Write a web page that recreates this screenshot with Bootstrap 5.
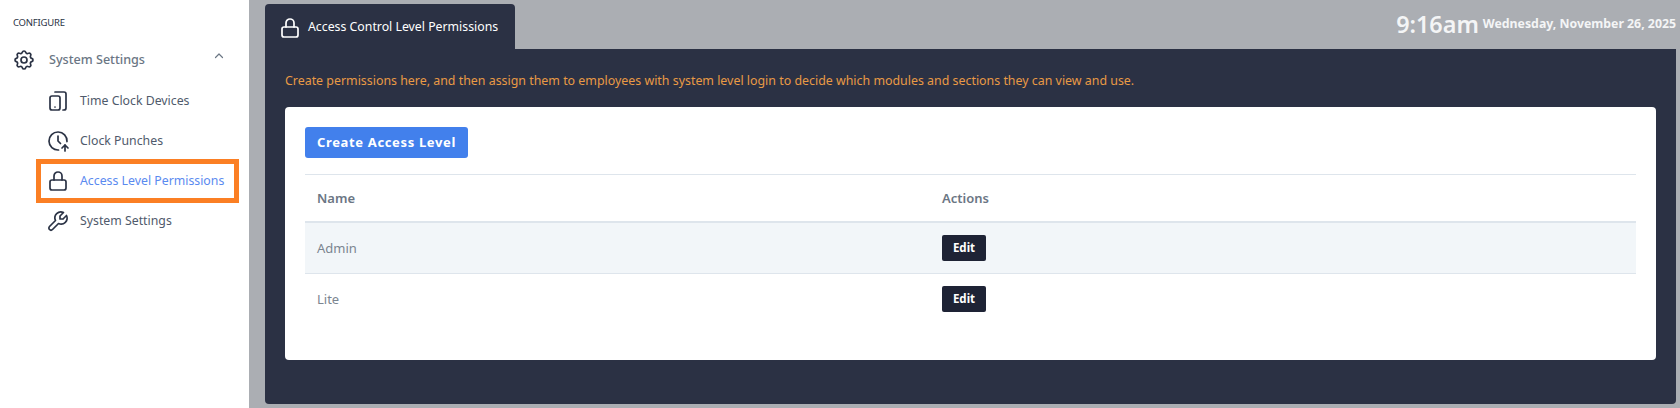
<!DOCTYPE html>
<html lang="en">
<head>
<meta charset="utf-8">
<title>Access Control Level Permissions</title>
<link href="https://cdn.jsdelivr.net/npm/bootstrap@5.3.0/dist/css/bootstrap.min.css" rel="stylesheet">
<style>
html,body{height:408px;overflow:hidden}
body{font-family:"Noto Sans","Open Sans",sans-serif;background:#abaeb3;font-size:13px}
.app-shell{height:408px}
.side-pane{width:249px;background:#fff;flex:none;padding:16px 0 0 13px}
.side-head{font-size:9.5px;color:#2b3345;line-height:13px;letter-spacing:-.2px}
.side-parent{height:40px;margin-top:11px;margin-right:13px;color:#6b7684;font-size:12.6px;font-weight:500}
.side-parent .gear{width:24px;height:24px;margin-left:-1px;margin-right:13px;color:#2b3345;flex:none}
.side-parent .chev{width:12px;height:12px;margin-left:auto;margin-right:11px;margin-top:-8px;color:#6b7684}
.side-sub{list-style:none;margin:0;padding:1px 0 0 36px}
.side-link{height:40px;color:#4f5a6b;text-decoration:none;position:relative;font-size:12.3px}
.side-link svg{width:24px;height:24px;margin-left:-3px;margin-right:10px;color:#2b3345;flex:none}
.side-link.current{color:#5a8af0}
.side-link.current::after{content:"";position:absolute;left:-13px;top:-2px;width:203px;height:44px;border:5px solid #fb7f24}
.main-pane{padding:4px 4px 4px 16px;min-width:0}
.top-strip{height:45px}
.tab-head{width:250px;height:45px;background:#2b3144;color:#fff;border-radius:4px 4px 0 0;padding:2px 0 0 13px;font-size:12.3px}
.tab-head svg{width:24px;height:24px;margin-right:6px;flex:none}
.clock-box{color:#f4f5f6;margin-top:-5px}
.clock-time{font-size:23.4px;font-weight:600;line-height:28px;margin-right:4px}
.clock-date{font-size:12.3px;font-weight:700;margin-top:1px}
.dark-panel{background:#2b3144;border-radius:0 0 4px 4px;padding:20px;height:355px}
.note-line{color:#e99a45;font-size:12.4px;line-height:22px;margin-bottom:15px;padding-top:1px}
.white-box{background:#fff;border-radius:4px;padding:20px;height:253px}
.make-btn{background:#4280ec;color:#fff;font-size:13px;font-weight:700;border:0;border-radius:3px;height:31px;width:163px;padding:0;letter-spacing:.65px}
.make-btn:hover{background:#4280ec;color:#fff}
.rule-line{margin:16px 0 0;border:0;border-top:1px solid #dee5ec;opacity:1}
.perm-grid{margin:0;table-layout:fixed;font-size:13px}
.perm-grid th{color:#6b7684;font-weight:600;height:47px;padding:1px 12px 0;vertical-align:middle;border-bottom:2px solid #dee5ec}
.perm-grid td{color:#7b8590;height:51px;padding:0 12px;vertical-align:middle;border-bottom:1px solid #dee5ec}
.perm-grid .name-cell{padding-top:1px}
.perm-grid tr:last-child td{border-bottom:0}
.perm-grid .tint td{background:#f2f6f9}
.edit-btn{background:#1e2335;color:#fff;font-size:11.5px;font-weight:700;border:0;border-radius:2px;width:44px;height:26px;padding:0}
.edit-btn:hover{background:#1e2335;color:#fff}
.col-one{width:625px}
</style>
</head>
<body>
<div class="app-shell d-flex">
  <aside class="side-pane">
    <div class="side-head">CONFIGURE</div>
    <div class="side-parent d-flex align-items-center">
      <svg class="gear" viewBox="0 0 24 24" fill="none" stroke="currentColor" stroke-width="1.7" stroke-linecap="round" stroke-linejoin="round"><path d="M10.325 4.317c.426-1.756 2.924-1.756 3.35 0a1.724 1.724 0 0 0 2.573 1.066c1.543-.94 3.31.826 2.37 2.37a1.724 1.724 0 0 0 1.065 2.572c1.756.426 1.756 2.924 0 3.35a1.724 1.724 0 0 0-1.066 2.573c.94 1.543-.826 3.31-2.37 2.37a1.724 1.724 0 0 0-2.572 1.065c-.426 1.756-2.924 1.756-3.35 0a1.724 1.724 0 0 0-2.573-1.066c-1.543.94-3.31-.826-2.37-2.37a1.724 1.724 0 0 0-1.065-2.572c-1.756-.426-1.756-2.924 0-3.35a1.724 1.724 0 0 0 1.066-2.573c-.94-1.543.826-3.31 2.37-2.37c1 .608 2.296.07 2.572-1.065z"/><circle cx="12" cy="12" r="3"/></svg>
      <span>System Settings</span>
      <svg class="chev" viewBox="0 0 12 12" fill="none" stroke="currentColor" stroke-width="1.2" stroke-linecap="round" stroke-linejoin="round"><path d="M2.5 7.5 6 4l3.500 3.500"/></svg>
    </div>
    <ul class="side-sub">
      <li><a href="#" class="side-link d-flex align-items-center">
        <svg viewBox="0 0 24 24" fill="none" stroke="currentColor" stroke-width="1.7" stroke-linecap="round" stroke-linejoin="round"><path d="M9 3h9a2 2 0 0 1 2 2v14a2 2 0 0 1-2 2h-1"/><rect x="4" y="7" width="10" height="14" rx="2"/><path d="M9 18v.01"/></svg>
        Time Clock Devices</a></li>
      <li><a href="#" class="side-link d-flex align-items-center">
        <svg viewBox="0 0 24 24" fill="none" stroke="currentColor" stroke-width="1.7" stroke-linecap="round" stroke-linejoin="round"><path d="M20.983 12.548a9 9 0 1 0-8.45 8.436"/><path d="M19 22v-6"/><path d="M22 19l-3-3l-3 3"/><path d="M12 7v5l2.500 2.500"/></svg>
        Clock Punches</a></li>
      <li><a href="#" class="side-link current d-flex align-items-center">
        <svg viewBox="0 0 24 24" fill="none" stroke="currentColor" stroke-width="1.7" stroke-linecap="round" stroke-linejoin="round"><rect x="4" y="11" width="16" height="10" rx="2"/><path d="M8 11V7a4 4 0 1 1 8 0v4"/></svg>
        Access Level Permissions</a></li>
      <li><a href="#" class="side-link d-flex align-items-center">
        <svg viewBox="0 0 24 24" fill="none" stroke="currentColor" stroke-width="1.7" stroke-linecap="round" stroke-linejoin="round"><path d="M17 10h-3V7l3.500-3.500a6 6 0 0 0-8 8l-6 6a2 2 0 0 0 3 3l6-6a6 6 0 0 0 8-8L17 10"/></svg>
        System Settings</a></li>
    </ul>
  </aside>
  <main class="main-pane flex-grow-1 d-flex flex-column">
    <div class="top-strip d-flex justify-content-between">
      <div class="tab-head d-flex align-items-center">
        <svg viewBox="0 0 24 24" fill="none" stroke="currentColor" stroke-width="1.7" stroke-linecap="round" stroke-linejoin="round"><rect x="4" y="11" width="16" height="10" rx="2"/><path d="M8 11V7a4 4 0 1 1 8 0v4"/></svg>
        <span>Access Control Level Permissions</span>
      </div>
      <div class="clock-box d-flex align-items-center text-nowrap">
        <span class="clock-time">9:16am</span><span class="clock-date">Wednesday, November 26, 2025</span>
      </div>
    </div>
    <section class="dark-panel">
      <p class="note-line">Create permissions here, and then assign them to employees with system level login to decide which modules and sections they can view and use.</p>
      <div class="white-box">
        <button type="button" class="btn make-btn">Create Access Level</button>
        <hr class="rule-line">
        <table class="table perm-grid">
          <thead><tr><th class="col-one">Name</th><th>Actions</th></tr></thead>
          <tbody>
            <tr class="tint"><td class="name-cell">Admin</td><td><button type="button" class="btn edit-btn">Edit</button></td></tr>
            <tr><td class="name-cell">Lite</td><td><button type="button" class="btn edit-btn">Edit</button></td></tr>
          </tbody>
        </table>
      </div>
    </section>
  </main>
</div>
<script src="https://cdn.jsdelivr.net/npm/bootstrap@5.3.0/dist/js/bootstrap.bundle.min.js"></script>
</body>
</html>
